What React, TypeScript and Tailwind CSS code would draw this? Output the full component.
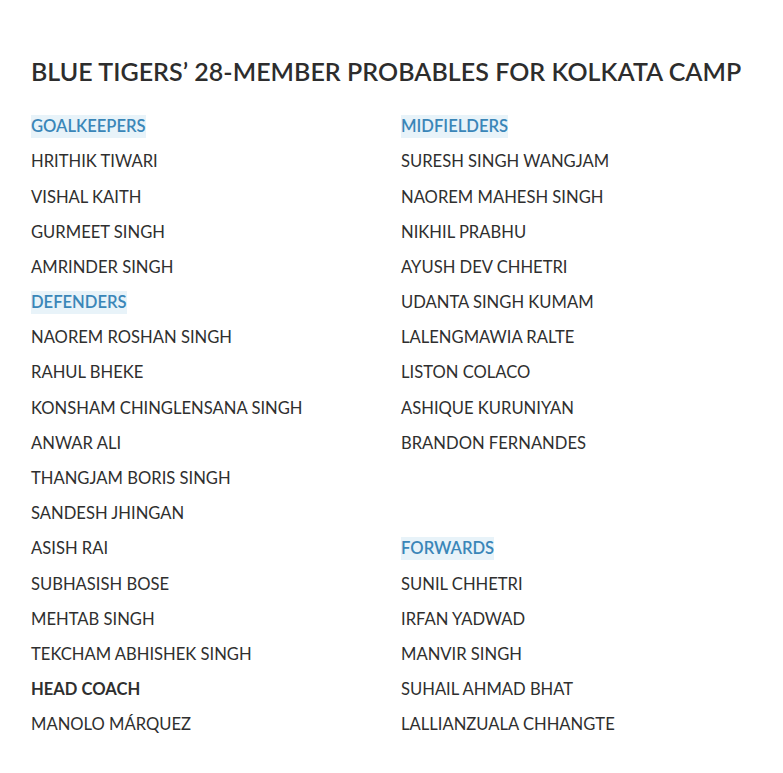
const left: [string, string][] = [
  ["h", "GOALKEEPERS"],
  ["n", "HRITHIK TIWARI"],
  ["n", "VISHAL KAITH"],
  ["n", "GURMEET SINGH"],
  ["n", "AMRINDER SINGH"],
  ["h", "DEFENDERS"],
  ["n", "NAOREM ROSHAN SINGH"],
  ["n", "RAHUL BHEKE"],
  ["n", "KONSHAM CHINGLENSANA SINGH"],
  ["n", "ANWAR ALI"],
  ["n", "THANGJAM BORIS SINGH"],
  ["n", "SANDESH JHINGAN"],
  ["n", "ASISH RAI"],
  ["n", "SUBHASISH BOSE"],
  ["n", "MEHTAB SINGH"],
  ["n", "TEKCHAM ABHISHEK SINGH"],
  ["b", "HEAD COACH"],
  ["n", "MANOLO MÁRQUEZ"],
];

const right: [string, string][] = [
  ["h", "MIDFIELDERS"],
  ["n", "SURESH SINGH WANGJAM"],
  ["n", "NAOREM MAHESH SINGH"],
  ["n", "NIKHIL PRABHU"],
  ["n", "AYUSH DEV CHHETRI"],
  ["n", "UDANTA SINGH KUMAM"],
  ["n", "LALENGMAWIA RALTE"],
  ["n", "LISTON COLACO"],
  ["n", "ASHIQUE KURUNIYAN"],
  ["n", "BRANDON FERNANDES"],
  ["e", ""],
  ["e", ""],
  ["h", "FORWARDS"],
  ["n", "SUNIL CHHETRI"],
  ["n", "IRFAN YADWAD"],
  ["n", "MANVIR SINGH"],
  ["n", "SUHAIL AHMAD BHAT"],
  ["n", "LALLIANZUALA CHHANGTE"],
];

function Cell({ kind, text }: { kind: string; text: string }) {
  if (kind === "h") {
    return (
      <div className="h-[35.2px] flex items-center">
        <span className="bg-[#e8f3f9] text-[#3a86b8] font-semibold leading-[23px]">
          {text}
        </span>
      </div>
    );
  }
  return (
    <div
      className={`h-[35.2px] flex items-center ${kind === "b" ? "font-bold" : ""}`}
    >
      {text}
    </div>
  );
}

export default function App() {
  return (
    <div
      className="min-h-screen bg-white text-[#2f2f2f] px-[31px] pt-[54px]"
      style={{ fontFamily: "Lato, 'Open Sans', sans-serif" }}
    >
      <h1 className="text-[25px] font-semibold tracking-[0.04px] leading-[34px] text-[#2d2d2d]">
        BLUE TIGERS’ 28-MEMBER PROBABLES FOR KOLKATA CAMP
      </h1>
      <div className="mt-[21px] grid grid-cols-[370px_1fr] text-[16.6px]">
        <div>
          {left.map(([k, t], i) => (
            <Cell key={i} kind={k} text={t} />
          ))}
        </div>
        <div>
          {right.map(([k, t], i) => (
            <Cell key={i} kind={k} text={t} />
          ))}
        </div>
      </div>
    </div>
  );
}
